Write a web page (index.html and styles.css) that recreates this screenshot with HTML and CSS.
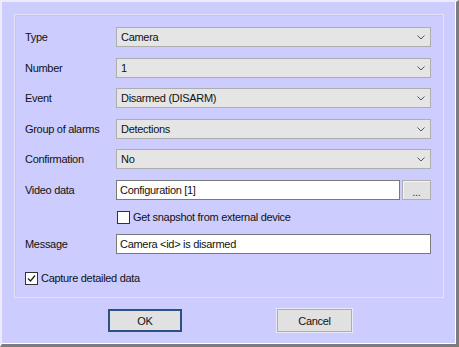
FILE: index.html
```html
<!DOCTYPE html>
<html>
    <head>
        <meta charset="utf-8">
        <link rel="stylesheet" href="styles.css">
    </head>
    <body>
        <div class="dialog">
            <div class="group">
                <div class="row">
                    <span class="row__label">Type</span>
                    <div class="combo"><span>Camera</span><svg class="combo__arrow" width="8" height="5" viewBox="0 0 8 5"><path d="M0.5 0.5 L4 4 L7.5 0.5" fill="none" stroke="#555" stroke-width="1"/></svg></div>
                </div>
                <div class="row">
                    <span class="row__label">Number</span>
                    <div class="combo"><span>1</span><svg class="combo__arrow" width="8" height="5" viewBox="0 0 8 5"><path d="M0.5 0.5 L4 4 L7.5 0.5" fill="none" stroke="#555" stroke-width="1"/></svg></div>
                </div>
                <div class="row">
                    <span class="row__label">Event</span>
                    <div class="combo"><span>Disarmed (DISARM)</span><svg class="combo__arrow" width="8" height="5" viewBox="0 0 8 5"><path d="M0.5 0.5 L4 4 L7.5 0.5" fill="none" stroke="#555" stroke-width="1"/></svg></div>
                </div>
                <div class="row">
                    <span class="row__label">Group of alarms</span>
                    <div class="combo"><span>Detections</span><svg class="combo__arrow" width="8" height="5" viewBox="0 0 8 5"><path d="M0.5 0.5 L4 4 L7.5 0.5" fill="none" stroke="#555" stroke-width="1"/></svg></div>
                </div>
                <div class="row">
                    <span class="row__label">Confirmation</span>
                    <div class="combo"><span>No</span><svg class="combo__arrow" width="8" height="5" viewBox="0 0 8 5"><path d="M0.5 0.5 L4 4 L7.5 0.5" fill="none" stroke="#555" stroke-width="1"/></svg></div>
                </div>
                <div class="row row_video">
                    <span class="row__label">Video data</span>
                    <div class="edit edit_short">Configuration [1]</div>
                    <div class="dots">...</div>
                </div>
                <div class="row row_check">
                    <span class="row__label"></span>
                    <span class="check"></span>
                    <span class="check__text">Get snapshot from external device</span>
                </div>
                <div class="row row_message">
                    <span class="row__label">Message</span>
                    <div class="edit">Camera &lt;id&gt; is disarmed</div>
                </div>
                <div class="row row_capture">
                    <span class="check check_on"><svg width="11" height="11" viewBox="0 0 11 11"><path d="M2 5.5 L4.5 8 L9 2.5" fill="none" stroke="#222" stroke-width="1.3"/></svg></span>
                    <span class="check__text">Capture detailed data</span>
                </div>
            </div>
            <div class="buttons">
                <div class="btn btn_default">OK</div>
                <div class="btn">Cancel</div>
            </div>
        </div>
    </body>
</html>
```
FILE: styles.css
```css
body, html {
    margin: 0;
    font-family: "Liberation Sans", Arial, sans-serif;
    font-size: 11px;
    letter-spacing: -0.3px;
    color: #111;
}

* {
    box-sizing: border-box;
}

.dialog {
    width: 459px;
    height: 347px;
    background-color: #ccccff;
    border-top: 2px solid #ececf8;
    border-left: 2px solid #ececf8;
    border-right: 3px solid #7c7c7c;
    border-bottom: 3px solid #7c7c7c;
    box-shadow: inset -1px -1px 0 #ffffff;
    padding: 12px 12px 0 12px;
}

.group {
    height: 284px;
    border: 1px solid #e2e2f6;
    box-shadow: inset 1px 1px 0 #c4c4ee;
    padding: 12px 12px 0 10px;
}

.row {
    display: flex;
    align-items: center;
    height: 20px;
    margin-bottom: 10.6px;
}

.row__label {
    width: 91px;
    flex-shrink: 0;
}

.combo {
    flex: 1;
    height: 20px;
    background-color: #e5e5e5;
    border: 1px solid #adadad;
    display: flex;
    align-items: center;
    justify-content: space-between;
    padding: 0 5px 0 4px;
}

.combo__arrow {
    margin-top: 1px;
}

.edit {
    flex: 1;
    height: 20px;
    background-color: #fff;
    border: 1px solid #7a7a7a;
    display: flex;
    align-items: center;
    padding: 0 3px;
}

.edit_short {
    flex: none;
    width: 284px;
}

.dots {
    width: 29px;
    height: 20px;
    margin-left: 2px;
    background-color: #e1e1e1;
    border: 1px solid #adadad;
    box-shadow: inset 1px 1px 0 #f4f4f4;
    text-align: center;
    line-height: 22px;
    color: #333;
}

.row_video {
    margin-bottom: 11px;
}

.row_check {
    height: 13px;
    margin-bottom: 10px;
}

.row_message {
    height: 20px;
    margin-bottom: 18px;
}

.row_capture {
    height: 13px;
    margin-bottom: 0;
}

.check {
    width: 13px;
    height: 13px;
    margin-left: 1px;
    background-color: #fff;
    border: 1px solid #333;
    display: flex;
    align-items: center;
    justify-content: center;
    flex-shrink: 0;
}

.check__text {
    margin-left: 3px;
}

.row_capture .check {
    margin-left: 0;
}

.buttons {
    display: flex;
    justify-content: center;
    gap: 95px;
    margin-top: 11px;
    padding-left: 2px;
}

.btn {
    width: 75px;
    height: 23px;
    background-color: #e1e1e1;
    border: 1px solid #adadad;
    box-shadow: 0 0 0 1px #e8e8fa;
    display: flex;
    align-items: center;
    justify-content: center;
}

.btn_default {
    width: 74px;
    border: 2px solid #2b5282;
    box-shadow: none;
}
```
